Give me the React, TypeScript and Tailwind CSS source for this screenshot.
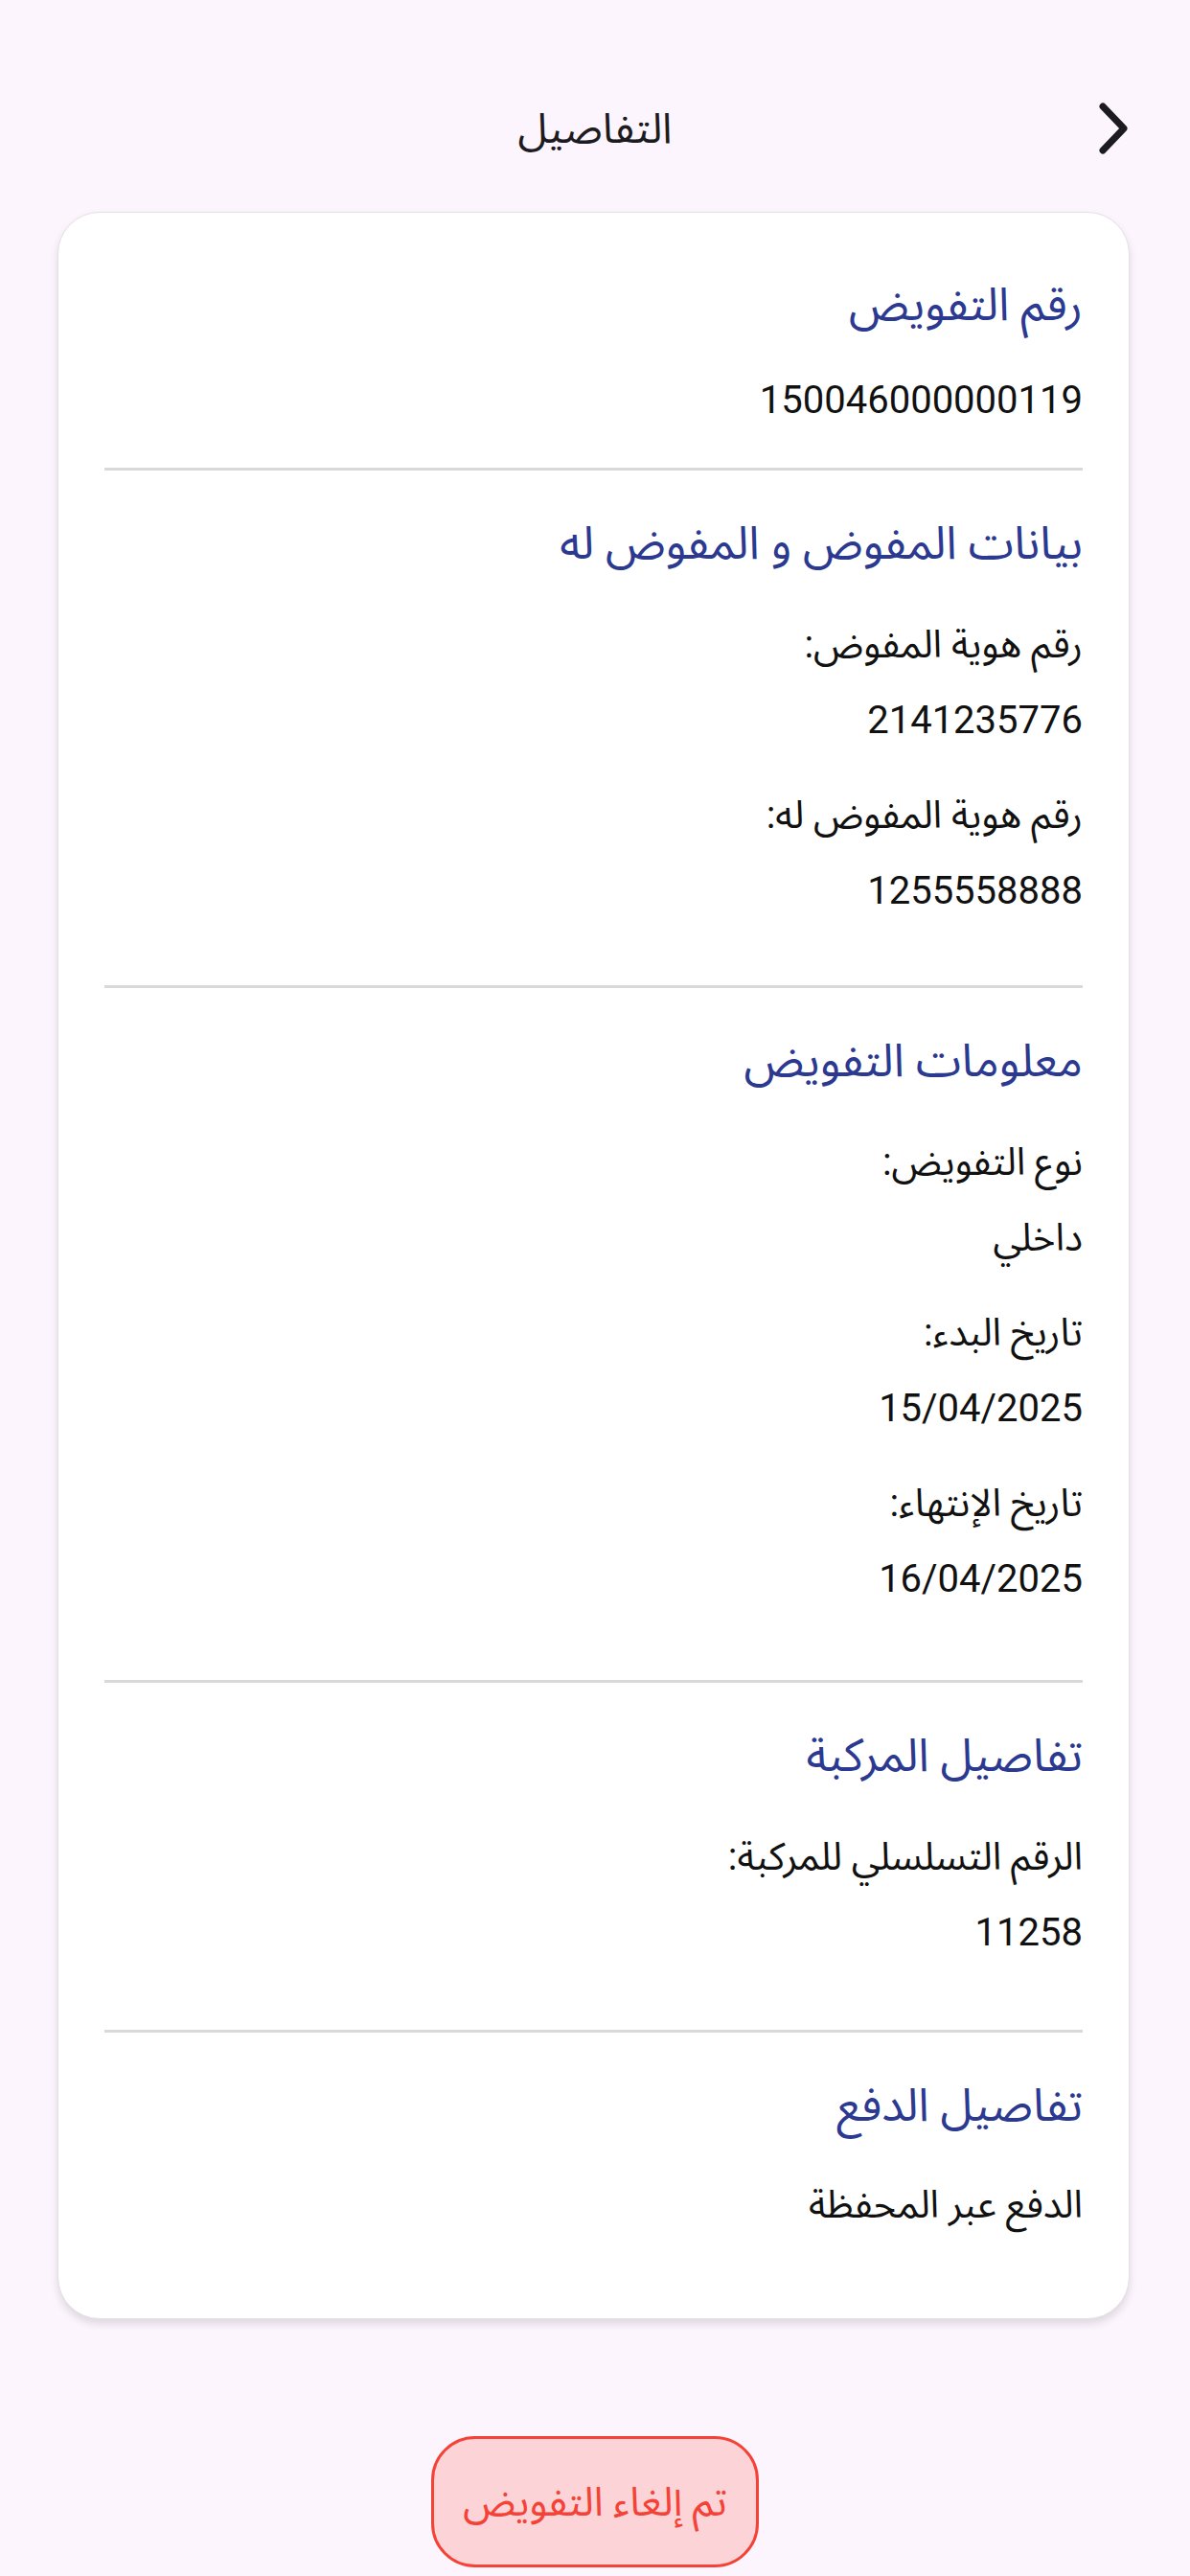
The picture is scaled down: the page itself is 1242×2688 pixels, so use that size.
import React from 'react';

const Divider = () => <div className="h-[3px] bg-[#d9d9d9]" />;

const Heading: React.FC<{ children: React.ReactNode }> = ({ children }) => (
  <h2 className="text-[48px] leading-[56px] text-[#2b3990] font-normal">{children}</h2>
);

const Field: React.FC<{ label: string; value: string; first?: boolean }> = ({ label, value, first }) => (
  <div className={first ? 'mt-[50px]' : 'mt-[43px]'}>
    <p className="text-[40px] leading-[56px] text-[#111]">{label}</p>
    <p className="mt-[23px] text-[40px] leading-[56px] text-[#111]">{value}</p>
  </div>
);

export default function App() {
  return (
    <div
      dir="rtl"
      className="min-h-[2688px] bg-[#fcf5fd] font-['Roboto','Noto_Sans_Arabic','DejaVu_Sans',sans-serif] pt-[80px]"
    >
      {/* Header */}
      <div className="relative h-[108px] flex items-center justify-center">
        <button className="absolute right-[60px] top-1/2 -translate-y-1/2 w-[40px] h-[60px] flex items-center justify-center">
          <svg width="34" height="56" viewBox="0 0 34 56" fill="none">
            <path d="M6 5 L28 28 L6 51" stroke="#1c1b1f" strokeWidth="7" strokeLinecap="round" strokeLinejoin="round" />
          </svg>
        </button>
        <h1 className="text-[44px] leading-[56px] text-[#1c1b1f] font-normal">التفاصيل</h1>
      </div>

      {/* Card */}
      <div className="mt-[33px] ml-[60px] mr-[63px] bg-white rounded-[44px] border border-[#e4e0e4] shadow-[0_5px_8px_rgba(0,0,0,0.12)] pl-[48px] pr-[48px] pt-[68px] pb-[90px]">
        <section className="pb-[42px]">
          <Heading>رقم التفويض</Heading>
          <p className="mt-[44px] text-[40px] leading-[56px] text-[#111]">150046000000119</p>
        </section>
        <Divider />

        <section className="pt-[48px] pb-[70px]">
          <Heading>بيانات المفوض و المفوض له</Heading>
          <Field first label="رقم هوية المفوض:" value="2141235776" />
          <Field label="رقم هوية المفوض له:" value="1255558888" />
        </section>
        <Divider />

        <section className="pt-[48px] pb-[77px]">
          <Heading>معلومات التفويض</Heading>
          <Field first label="نوع التفويض:" value="داخلي" />
          <Field label="تاريخ البدء:" value="15/04/2025" />
          <Field label="تاريخ الإنتهاء:" value="16/04/2025" />
        </section>
        <Divider />

        <section className="pt-[48px] pb-[73px]">
          <Heading>تفاصيل المركبة</Heading>
          <Field first label="الرقم التسلسلي للمركبة:" value="11258" />
        </section>
        <Divider />

        <section className="pt-[48px]">
          <Heading>تفاصيل الدفع</Heading>
          <p className="mt-[48px] text-[40px] leading-[56px] text-[#111]">الدفع عبر المحفظة</p>
        </section>
      </div>

      {/* Status button */}
      <div className="mt-[122px] flex justify-center">
        <button className="h-[137px] px-[30px] min-w-[334px] rounded-[46px] border-[3px] border-[#f44336] bg-[#fcd4d8] text-[#f44336] text-[42px] leading-[56px]">
          تم إلغاء التفويض
        </button>
      </div>
    </div>
  );
}
